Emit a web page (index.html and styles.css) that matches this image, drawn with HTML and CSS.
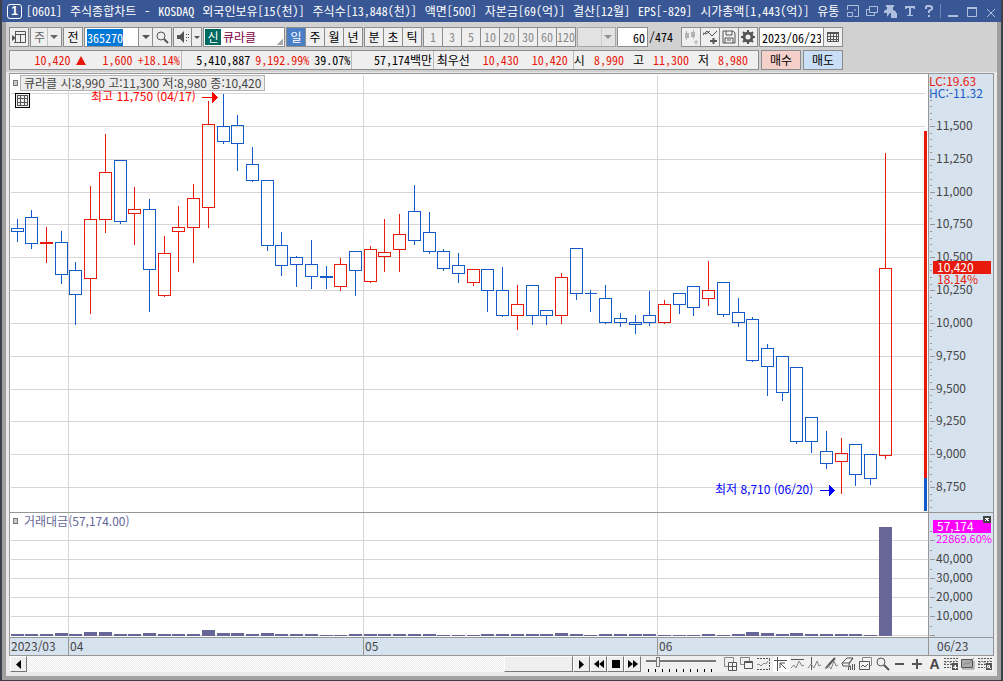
FILE: index.html
```
<!DOCTYPE html>
<html lang="ko">
<head>
  <meta charset="UTF-8" />
  <meta name="viewport" content="width=device-width, initial-scale=1.0"/>
  <title>[0601] 주식종합차트</title>
  <link rel="stylesheet" href="styles.css">
</head>
<body>

  <header class="titlebar">
    <span class="badge">1</span>
    <div class="title-text">
      <span>[0601]</span><span>주식종합차트</span><span>-</span><span>KOSDAQ</span><span>외국인보유[15(천)]</span><span>주식수[13,848(천)]</span><span>액면[500]</span><span>자본금[69(억)]</span><span>결산[12월]</span><span>EPS[-829]</span><span>시가총액[1,443(억)]</span><span>유통</span>
    </div>
    <div class="title-tools">
      <button aria-label="화면 축소"><svg width="14" height="14"><path d="M1.5 6V1.5h11v11H8M1.5 8.5h5v4h-5zM8 6h2"/></svg></button>
      <button aria-label="화면 복사"><svg width="14" height="14"><path d="M4.500 2.500h8v6h-8zM4 5.500H1.500v6h8V9"/></svg></button>
      <button aria-label="고정"><svg width="14" height="14"><path class="solid" d="M2 1h8v2H9v3l2 1v2H6l-3 4V9H0V7l3-2V3H2z"/><path class="solid" d="M7 9h6v5H7z"/><path d="M8.500 9V7.500h3V9"/></svg></button>
      <button aria-label="글꼴"><svg width="14" height="14"><path class="solid" d="M2 2h10v3h-1l-1-1H8v7h2v1H4v-1h2V4H4L3 5H2z"/></svg></button>
      <button aria-label="도움말"><svg width="14" height="14"><path class="thick" d="M4 5V3l1-1h3l2 1v2L7 7v2M7 11v2"/></svg></button>
    </div>
    <div class="window-tools">
      <button aria-label="최소화"><svg width="14" height="14"><path class="thick" d="M2 12h10"/></svg></button>
      <button aria-label="최대화"><svg width="14" height="14"><path d="M2.500 3.500h9v9h-9z"/><path class="thick" d="M2 4h10"/></svg></button>
      <button aria-label="닫기"><svg width="14" height="14"><path d="M3 5l8 8M11 5l-8 8"/></svg></button>
    </div>
  </header>

  <main class="frame">
    <div class="toolbars">
      <div class="toolbar">
        <button class="btn" aria-label="종목 목록"><svg width="16" height="14"><path d="M4.500 1.500h10v11H3M4.500 1v12M4.500 4.500h10M9.500 4v8"/><path class="solid" d="M1 5l4 3-4 3z"/></svg></button>
        <select class="pick market" aria-label="시장"><option>주</option></select>
        <button class="btn">전</button>
        <div class="joined">
          <input class="field code" aria-label="종목코드" value="365270">
          <button class="btn drop" aria-label="종목코드 목록"><i class="arrow"></i></button>
          <button class="btn" aria-label="검색"><svg width="14" height="14"><circle cx="6" cy="6" r="4"/><path class="thick" d="M9 9l4 4"/></svg></button>
        </div>
        <div class="joined">
          <button class="btn sound" aria-label="소리"><svg width="14" height="14"><path class="solid" d="M1 5h3l4-4v12L4 9H1z"/><path d="M10 4.500h1M10 7.500h1M10 10.500h1M12 4.500h1M12 7.500h1"/></svg></button>
          <button class="btn thin" aria-label="소리 설정"><i class="arrow"></i></button>
        </div>
        <div class="stock"><b>신</b><span>큐라클</span></div>
        <div class="joined">
          <button class="btn active">일</button><button class="btn">주</button><button class="btn">월</button><button class="btn">년</button>
        </div>
        <div class="joined">
          <button class="btn">분</button><button class="btn">초</button><button class="btn">틱</button>
        </div>
        <div class="joined minutes">
          <button class="btn">1</button><button class="btn">3</button><button class="btn">5</button><button class="btn">10</button><button class="btn">20</button><button class="btn">30</button><button class="btn">60</button><button class="btn">120</button>
        </div>
        <select class="pick custom" aria-label="분 직접선택" disabled><option></option></select>
        <input class="field count" aria-label="봉 개수" value="60">
        <span class="total">/474</span>
        <div class="joined">
          <button class="btn" aria-label="종목 추가"><svg class="faint" width="16" height="16"><path d="M3.500 2v9M10.500 1v9M11 13h4M13 11v5"/><path class="solid" d="M2 4h4v5H2zM8 3h4v5H8z"/></svg></button>
          <button class="btn" aria-label="지표 추가"><svg width="16" height="16"><path d="M1 6l4-4 5 5 5-5M1 4l3 1 4-3"/><path class="thick" d="M8 12h7M11.500 9v6"/></svg></button>
          <button class="btn" aria-label="저장"><svg width="16" height="16"><path d="M2 2h10l2 2v10H2zM5 2v4h6V2M4 14V9h8v5M6 11h4"/></svg></button>
          <button class="btn" aria-label="설정"><svg width="16" height="16"><circle class="gear" cx="8" cy="8" r="4"/><path class="thick" d="M8 1v3M8 12v3M1 8h3M12 8h3M3 3l2 2M11 11l2 2M13 3l-2 2M3 13l2-2"/></svg></button>
        </div>
        <div class="joined">
          <input class="field date" aria-label="기준일" value="2023/06/23">
          <button class="btn" aria-label="달력"><svg width="14" height="14"><path d="M1.500 2.500h11v9h-11zM1 6.500h11M1 9.500h11M4.500 4v8M7.500 4v8M10.500 4v8"/><path class="thick" d="M1 3h12"/></svg></button>
        </div>
      </div>

      <div class="toolbar">
        <div class="quote">
          <div class="cell price"><span class="up">10,420</span><i class="tri"></i><span class="up change">1,600</span><span class="up">+18.14%</span></div>
          <div class="cell volume"><span>5,410,887</span><span class="up">9,192.99%</span><span>39.07%</span></div>
          <div class="cell amount"><span>57,174백만</span></div>
          <div class="cell best"><span>최우선</span><span class="up">10,430</span><span class="up">10,420</span></div>
          <div class="cell range"><span>시</span><span class="up">8,990</span><span>고</span><span class="up">11,300</span><span>저</span><span class="up">8,980</span></div>
        </div>
        <button class="btn order buy">매수</button>
        <button class="btn order sell">매도</button>
      </div>
    </div>

    <section class="chart">
      <div class="plots">
        <div class="plot">
          <svg id="plot" viewBox="10 74 918 563" preserveAspectRatio="none">
            <g id="grid"></g>
            <path class="sep" d="M10 512.500h918"/>
            <g id="volumes"></g>
            <g id="candles"></g>
            <path class="bar-up" d="M924 131h3v347h-3z"/>
            <path class="bar-down" d="M924 478h3v33h-3z"/>
            <g class="high"><text x="91" y="101">최고 11,750 (04/17)</text><path d="M202 97h10v-5l6 5.500-6 5.500v-5h-10z"/></g>
            <g class="low"><text x="715" y="494">최저 8,710 (06/20)</text><path d="M820 490h9v-5l6 5.500-6 5.500v-5h-9z"/></g>
          </svg>
          <div class="legend"><i class="mark"></i><span class="legend-box">큐라클 시:8,990 고:11,300 저:8,980 종:10,420</span></div>
          <button class="grid-btn" aria-label="데이터 보기"><svg width="11" height="11"><path d="M.5.5h10v10H.5zM0 3.500h11M0 7.500h11M3.500 0v11M7.500 0v11"/></svg></button>
          <div class="legend legend-vol"><i class="mark"></i><span>거래대금(57,174.00)</span></div>
        </div>
        <svg id="axis" class="axis" viewBox="929 74 64 563" preserveAspectRatio="none">
          <text class="lc" x="929" y="86">LC:19.63</text>
          <text class="hc" x="929" y="98">HC:-11.32</text>
          <g id="ticks"></g>
          <path class="axis-bg" d="M936 274h57v11h-57z"/>
          <path class="bar-up" d="M933 261h58v13h-58z"/>
          <text class="now" x="937" y="272">10,420</text>
          <text class="rate" x="937" y="284">18.14%</text>
          <path class="sep" d="M929 512.500h64"/>
          <path class="vol-tag" d="M933 520h58v13h-58z"/>
          <text class="now" x="937" y="531">57,174</text>
          <text class="vol-rate" x="936" y="543">22869.60%</text>
          <path class="close-box" d="M983 516h8v7h-8z"/>
          <path class="close-x" d="M985 518l4 3M989 518l-4 3"/>
        </svg>
      </div>
      <div class="dates">
        <div class="months"><span>2023/03</span><span>04</span><span>05</span><span>06</span></div>
        <span class="today">06/23</span>
      </div>
    </section>

    <footer class="controls">
      <button class="raised" aria-label="왼쪽으로"><svg width="7" height="9"><path class="solid" d="M6 0v9L1 4.500z"/></svg></button>
      <div class="track"><div class="thumb"></div></div>
      <button class="raised" aria-label="오른쪽으로"><svg width="7" height="9"><path class="solid" d="M1 0v9l5-4.500z"/></svg></button>
      <button class="raised" aria-label="뒤로"><svg width="10" height="8"><path class="solid" d="M5 0v8L0 4zM10 0v8L5 4z"/></svg></button>
      <button class="raised" aria-label="정지"><svg width="8" height="8"><path class="solid" d="M0 0h8v8H0z"/></svg></button>
      <button class="raised" aria-label="앞으로"><svg width="10" height="8"><path class="solid" d="M0 0v8l5-4zM5 0v8l5-4z"/></svg></button>
      <div class="zoom"><input type="range" aria-label="재생 속도" min="0" max="20" value="3"><i class="marks"></i></div>
      <div class="tools">
        <button aria-label="차트 추가"><svg width="16" height="16"><path class="lite" d="M2.500 1.500h9v9h-9z"/><path class="fill" d="M6.500 6.500h8v8h-8zM10.500 6v8M6 10.500h8"/></svg></button>
        <button aria-label="차트 겹치기"><svg width="16" height="16"><path class="lite" d="M1.500 1.500h9v7h-9z"/><path class="fill" d="M5.500 5.500h8v7h-8z"/><path d="M5 6.500h9"/></svg></button>
        <button aria-label="구간 분할"><svg width="16" height="16"><path class="dots" d="M1 2.500h13M1 13.500h13M13.500 3v10"/><path class="lite" d="M1 9l2-1 2 2 3-3 2 1 2-3"/></svg></button>
        <button class="on" aria-label="선택"><svg width="16" height="16"><path d="M1 4.500h13M4.500 1v14"/><path d="M7 7l6 6M7 12V7h5"/></svg></button>
        <button aria-label="수평선"><svg width="16" height="16"><path d="M1 3.500h13"/><path class="lite" d="M1 12l3-3 2 3 3-7 3 5 2-1"/></svg></button>
        <button aria-label="수직선"><svg width="16" height="16"><path d="M4.500 1v13"/><path class="lite" d="M1 12l3-4 3 4 3-7 2 5 2-1"/></svg></button>
        <button aria-label="추세선"><svg width="16" height="16"><path class="mid" d="M2 12L11 2"/><path class="lite" d="M1 13l3-4 3 4 3-8 2 5 2-1"/></svg></button>
        <button aria-label="모두 지우기"><svg width="16" height="16"><path class="fill" d="M1 7l5-5h6l-4 6v2H2z"/><path d="M2 7h6l4-5M7.500 14v-3l2-1v4M11.500 8v6M13.500 8v6"/></svg></button>
        <button aria-label="차트 저장"><svg width="16" height="16"><path class="lite fill" d="M4.500 1.500h9v8h-9z"/><path class="fill" d="M1.500 5.500h10v8h-10z"/><path d="M3 11l2-2 2 2 3-3"/></svg></button>
        <button aria-label="돋보기"><svg width="16" height="16"><circle cx="6" cy="6" r="4"/><path class="thick" d="M9 9l5 5"/></svg></button>
        <button aria-label="축소"><svg width="16" height="16"><path class="thick" d="M3 8h9"/></svg></button>
        <button aria-label="확대"><svg width="16" height="16"><path class="thick" d="M3 8h10M8 3v10"/></svg></button>
        <button class="letter">A</button>
        <button aria-label="차트 유형"><svg width="16" height="16"><path class="dots" d="M1 2.500h14M1 5.500h14M1 8.500h8M1 11.500h7"/><path class="lite" d="M1 8l4-3 4 3 4-4"/><path class="solid" d="M9 7h6v7H9z"/><path class="white" d="M12.500 13V9l-2 2.500h4"/></svg></button>
        <button aria-label="배경"><svg width="16" height="16"><path class="gray" d="M1.500 3.500h11v8h-11z"/><path class="lite" d="M3 9l3-2 2 1 6-6M2 13h12V5"/></svg></button>
        <button aria-label="차트 검색"><svg width="16" height="16"><path class="dots" d="M1 2.500h14M1 5.500h14M1 8.500h8M1 11.500h7"/><path class="lite" d="M1 8l4-3 4 3 4-4"/><path class="solid" d="M9 7h6v7H9z"/><path class="white" d="M10.500 9.500h2v2h-2zM12 11l2 2"/></svg></button>
      </div>
    </footer>
  </main>

  <script>
    // center x, high, body top, body bottom, low, direction, volume height
    const candles = [
      [17, 218, 228, 231, 240, "d", 2], [31, 209, 217, 243, 247, "d", 2], [46, 226, 242, 243, 261, "u", 2],
      [61, 230, 242, 274, 282, "d", 3], [75, 261, 270, 294, 323, "d", 2], [90, 185, 219, 278, 312, "u", 4],
      [105, 133, 172, 219, 231, "u", 4], [120, 160, 160, 221, 222, "d", 2], [134, 186, 209, 213, 243, "u", 2],
      [149, 198, 209, 269, 310, "d", 3], [164, 235, 253, 295, 295, "u", 2], [178, 205, 227, 231, 270, "u", 2],
      [193, 183, 198, 227, 261, "u", 2], [208, 100, 124, 207, 226, "u", 6], [223, 93, 126, 141, 142, "d", 3],
      [237, 114, 125, 143, 169, "d", 3], [252, 146, 164, 180, 180, "d", 2], [267, 180, 180, 245, 249, "d", 3],
      [281, 231, 245, 265, 274, "d", 2], [296, 255, 257, 264, 285, "d", 2], [311, 239, 264, 276, 287, "d", 2],
      [326, 265, 276, 277, 287, "d", 1], [340, 257, 264, 286, 289, "u", 1], [355, 251, 251, 270, 294, "d", 2],
      [370, 245, 249, 281, 281, "u", 2], [384, 218, 252, 256, 270, "u", 2], [399, 213, 234, 249, 270, "u", 2],
      [414, 184, 211, 240, 243, "d", 2], [429, 211, 232, 251, 252, "d", 2], [443, 248, 251, 268, 269, "d", 1],
      [458, 252, 265, 273, 281, "d", 1], [473, 269, 269, 282, 284, "u", 1], [487, 269, 269, 290, 310, "d", 2],
      [502, 266, 290, 315, 315, "d", 2], [517, 284, 304, 315, 328, "u", 2], [532, 285, 285, 315, 323, "d", 2],
      [546, 310, 310, 315, 323, "d", 2], [561, 272, 277, 315, 322, "u", 3], [576, 248, 248, 293, 298, "d", 2],
      [590, 289, 293, 293, 310, "d", 1], [605, 284, 298, 322, 322, "d", 2], [620, 312, 318, 322, 325, "d", 2],
      [635, 314, 322, 324, 332, "d", 2], [649, 290, 315, 322, 324, "d", 2], [664, 299, 304, 322, 322, "u", 1],
      [679, 293, 293, 304, 312, "d", 1], [693, 286, 286, 307, 314, "d", 1], [708, 260, 290, 298, 304, "u", 2],
      [723, 282, 282, 314, 315, "d", 1], [738, 297, 312, 322, 325, "d", 2], [752, 316, 319, 360, 360, "d", 4],
      [767, 343, 348, 366, 394, "d", 3], [782, 356, 356, 392, 399, "d", 2], [796, 367, 367, 441, 442, "d", 3],
      [811, 417, 417, 441, 451, "d", 2], [826, 430, 451, 463, 467, "d", 2], [841, 437, 453, 461, 492, "u", 2],
      [855, 444, 444, 474, 484, "d", 2], [870, 454, 454, 478, 483, "d", 1], [885, 152, 268, 455, 457, "u", 109]
    ];

    const monthLines = [68, 363, 657];
    const priceY = price => Math.round(126 + (11500 - price) * 0.1313);
    const volumeY = amount => Math.round(635 - amount * 0.0019);

    let grid = "", ticks = "", bars = "", bodies = "";

    monthLines.forEach(x => grid += `<path d="M${x} 74v563"/>`);

    for (let p = 11750; p >= 8750; p -= 250) {
      const y = priceY(p);
      grid += `<path d="M10 ${y}h914"/>`;
      if (p < 11750) {
        ticks += `<path d="M929 ${y}h5"/><text x="936" y="${y + 4}">${p.toLocaleString("en-US")}</text>`;
      }
    }
    for (let p = 11750; p > 8570; p -= 50) ticks += `<path d="M929 ${priceY(p)}h2"/>`;

    for (let v = 0; v <= 50000; v += 10000) {
      const y = volumeY(v);
      grid += `<path d="M10 ${y}h917"/>`;
      ticks += `<path d="M929 ${y}h5M929 ${y - 9}h2"/>`;
      if (v > 0 && v < 50000) ticks += `<text x="936" y="${y + 4}">${v.toLocaleString("en-US")}</text>`;
    }

    candles.forEach(([x, high, top, bottom, low, dir, vol]) => {
      bars += `<rect x="${x - 6}" y="${636 - vol}" width="13" height="${vol}"/>`;
      bodies += `<path class="${dir}" d="M${x - 6} ${top}h12V${bottom}h-12zM${x} ${high}V${top}M${x} ${bottom}V${low + 1}"/>`;
    });

    document.getElementById("grid").innerHTML = grid;
    document.getElementById("ticks").innerHTML = ticks;
    document.getElementById("volumes").innerHTML = bars;
    document.getElementById("candles").innerHTML = bodies;

    const code = document.querySelector(".code");
    code.focus();
    code.select();
  </script>
</body>
</html>
```
FILE: styles.css
```
:root {
  --up: #e71a0c;
  --down: #125bc8;
  --line: #969696;
  --axis: #d7e2ef;
  --mono: "Noto Sans Mono CJK KR", "Noto Sans CJK KR", monospace;
  --sans: "Noto Sans CJK KR", sans-serif;
}

* {
  box-sizing: border-box;
}

body {
  background: #3c4149;
  margin: 0;
  padding: 0 2px 1px;
  height: 100vh;
  display: flex;
  flex-direction: column;
  font: 12px/16px var(--mono);
  color: black;
  overflow: hidden;
}

button, input, select {
  font: inherit;
  color: inherit;
  margin: 0;
  padding: 0;
  border-radius: 0;
}

svg {
  display: block;
  fill: none;
  stroke: #555;
}

svg .solid {
  fill: #555;
  stroke: none;
}

svg .thick {
  stroke-width: 2;
}

/* title bar */

.titlebar {
  display: flex;
  align-items: center;
  height: 22px;
  flex: none;
  padding: 0 3px 0 5px;
  background: #3a5795;
  color: white;
}

.badge {
  width: 15px;
  height: 15px;
  border: 1px solid white;
  border-radius: 3px;
  font: bold 12px/13px "Liberation Sans", sans-serif;
  text-align: center;
  margin-right: 4px;
}

.title-text {
  flex: 1;
  display: flex;
  gap: 8px;
  overflow: hidden;
  white-space: nowrap;
}

.title-tools, .window-tools {
  display: flex;
  gap: 5px;
  padding-left: 5px;
}

.window-tools {
  margin-left: 4px;
  padding-left: 5px;
  border-left: 1px solid #6f86b8;
}

.titlebar button {
  border: 0;
  background: none;
}

.titlebar svg {
  stroke: #aebfe0;
}

.titlebar svg .solid {
  fill: #aebfe0;
}

/* toolbars */

.frame {
  flex: 1;
  min-height: 0;
  display: flex;
  flex-direction: column;
  border: solid #a0a0a0;
  border-width: 0 4px 4px;
  background: #e9e9e9;
}

.toolbars {
  background: #d1d1d1;
  padding: 5px 3px 2px;
  display: flex;
  flex-direction: column;
  gap: 3px;
}

.toolbar {
  display: flex;
  gap: 1px;
  height: 20px;
}

.joined {
  display: flex;
}

.joined > * + * {
  margin-left: -1px;
}

.btn {
  width: 20px;
  height: 20px;
  flex: none;
  display: flex;
  align-items: center;
  justify-content: center;
  border: 1px solid #8c8c8c;
  background: #efefef;
  white-space: nowrap;
}

.btn.drop {
  width: 15px;
}

.btn.thin {
  width: 11px;
}

.btn.sound {
  width: 19px;
}

.btn.active {
  background: #4a7fc8;
  color: white;
}

.minutes {
  color: #8a8a8a;
}

.arrow {
  border: 4px solid transparent;
  border-top-color: #555;
  border-bottom: 0;
}

.thin .arrow {
  border-width: 3px 3px 0;
}

.pick {
  appearance: none;
  height: 20px;
  border: 1px solid #8c8c8c;
  padding-left: 3px;
  background: #efefef url("data:image/svg+xml,%3Csvg xmlns='http://www.w3.org/2000/svg' width='14' height='18'%3E%3Cpath d='M0 0v18' stroke='%23999'/%3E%3Cpath d='M3 7h8l-4 4z' fill='%23666'/%3E%3C/svg%3E") no-repeat right center;
}

.market {
  width: 32px;
  color: #666;
}

.custom {
  width: 39px;
  opacity: .6;
}

.field {
  height: 20px;
  border: 1px solid #8c8c8c;
  background: white;
  outline: 0;
  padding: 0 2px;
}

.code {
  width: 55px;
}

.code::selection {
  background: #0078d7;
  color: white;
}

.count {
  width: 31px;
  text-align: right;
}

.date {
  width: 65px;
}

.total {
  width: 31px;
  line-height: 20px;
}

.faint {
  opacity: .4;
}

.gear {
  stroke-width: 3;
}

.stock {
  width: 82px;
  display: flex;
  align-items: center;
  gap: 2px;
  padding: 1px;
  border: 1px solid #8c8c8c;
  background: linear-gradient(135deg, transparent 50%, #aaa 50%) no-repeat right 1px bottom 1px / 7px 7px, white;
  color: #800040;
}

.stock b {
  width: 16px;
  background: #00695f;
  color: white;
  font-weight: normal;
  text-align: center;
}

/* quote line */

.quote {
  width: 750px;
  display: flex;
  border: 1px solid #8c8c8c;
  background: #efefef;
  line-height: 18px;
  white-space: nowrap;
}

.cell {
  display: flex;
  justify-content: flex-end;
  gap: 5px;
  padding-right: 1px;
  border-right: 1px solid #bbb;
}

.price {
  width: 172px;
}

.volume {
  width: 171px;
}

.amount {
  width: 82px;
}

.best {
  width: 140px;
  gap: 13px;
  padding-right: 5px;
}

.range {
  flex: 1;
  border-right: 0;
  gap: 9px;
  padding-right: 10px;
}

.up {
  color: var(--up);
}

.tri {
  align-self: center;
  border: 5px solid transparent;
  border-bottom: 9px solid var(--up);
  border-top: 0;
}

.change {
  margin-left: 12px;
}

.order {
  width: 40px;
  margin-left: 1px;
}

.buy {
  background: #f5d0cb;
}

.sell {
  background: #c8dff5;
}

/* chart */

.chart {
  flex: 1;
  min-height: 0;
  display: flex;
  flex-direction: column;
  margin: 1px 3px 0;
  border: 1px solid var(--line);
  background: white;
  font-family: var(--sans);
  color: #464646;
}

.plots {
  flex: 1;
  min-height: 0;
  display: flex;
}

.plot {
  flex: 1;
  min-width: 0;
  position: relative;
}

.plots svg {
  stroke-width: 1;
  shape-rendering: crispEdges;
}

#plot {
  width: 100%;
  height: 100%;
}

#plot text, #axis text {
  stroke: none;
  fill: #464646;
}

#grid, #candles, #ticks path {
  transform: translate(.5px, .5px);
}

#grid {
  stroke: #d6d6d6;
}

#volumes {
  fill: #666699;
  stroke: none;
}

#candles .u {
  stroke: var(--up);
}

#candles .d {
  stroke: var(--down);
}

.plots .sep {
  stroke: var(--line);
}

.plots .bar-up {
  fill: var(--up);
  stroke: none;
}

.bar-down {
  fill: var(--down);
  stroke: none;
}

#plot .high, #plot .high text {
  fill: red;
  stroke: none;
}

#plot .low, #plot .low text {
  fill: blue;
  stroke: none;
}

.axis {
  flex: none;
  width: 65px;
  height: 100%;
  border-left: 1px solid var(--line);
  background: var(--axis);
  font-size: 12px;
}

.axis path {
  stroke: var(--line);
}

.axis .axis-bg {
  fill: var(--axis);
  stroke: none;
}

#axis .lc, #axis .rate {
  fill: var(--up);
}

#axis .hc {
  fill: var(--down);
}

#axis .now {
  fill: white;
}

.axis .vol-tag {
  fill: #f0f;
  stroke: none;
}

#axis .vol-rate {
  fill: #f0f;
  font-size: 11px;
}

.axis .close-box {
  fill: #444;
  stroke: none;
}

.axis .close-x {
  stroke: white;
}

.legend {
  position: absolute;
  left: 3px;
  top: 1px;
  display: flex;
  align-items: center;
  gap: 2px;
  line-height: 14px;
}

.legend-vol {
  top: 440px;
  gap: 6px;
  color: #666699;
}

.legend-box {
  border: 1px solid #b4b4b4;
  background: #ececec;
  padding: 0 3px;
}

.mark {
  width: 5px;
  height: 6px;
  border: 1px solid #777;
  background: #ccc;
}

.grid-btn {
  position: absolute;
  left: 5px;
  top: 19px;
  padding: 1px;
  border: 1px solid black;
  background: #eee;
}

.dates {
  display: flex;
  height: 18px;
  border-top: 1px solid var(--line);
  background: var(--axis);
  line-height: 16px;
}

.months {
  flex: 1;
  display: grid;
  grid-template-columns: 58fr 295fr 294fr 271fr;
}

.months span {
  padding-left: 1px;
}

.months span + span {
  border-left: 1px solid var(--line);
}

.today {
  width: 65px;
  padding-left: 8px;
  border-left: 1px solid var(--line);
}

/* bottom controls */

.controls {
  display: flex;
  height: 20px;
  padding: 0 3px 4px;
  margin-left: 1px;
}

.raised {
  width: 17px;
  display: flex;
  align-items: center;
  justify-content: center;
  border: 1px solid;
  border-color: #fff #777 #777 #fff;
  background: #efefef;
}

.raised .solid {
  fill: black;
}

.track {
  flex: 1;
  display: flex;
  justify-content: flex-end;
  background: repeating-conic-gradient(#fff 0 25%, #ececec 0 50%) 0 0 / 2px 2px;
}

.thumb {
  width: 69px;
  border: 1px solid;
  border-color: #fff #777 #777 #fff;
  background: #efefef;
}

.zoom {
  width: 81px;
  padding: 0 5px;
  background: #f0f0f0;
}

.zoom input {
  appearance: none;
  display: block;
  width: 70px;
  height: 11px;
  background: linear-gradient(#777, #777) no-repeat center 4px / 100% 2px;
}

.zoom input::-webkit-slider-thumb {
  appearance: none;
  width: 4px;
  height: 10px;
  border: 1px solid #777;
  background: #eee;
}

.marks {
  display: block;
  height: 3px;
  margin: 2px 0 0 2px;
  width: 67px;
  background: repeating-linear-gradient(90deg, black 0 1px, transparent 1px 7px);
}

.tools {
  display: flex;
  background: #f0f0f0;
}

.tools button {
  width: 17px;
  border: 0;
  background: none;
}

.tools .on {
  background: white;
}

.tools .lite {
  stroke: #888;
}

.tools .mid {
  stroke-width: 2;
}

.tools .fill {
  fill: #f4f4f4;
}

.tools .gray {
  fill: #aaa;
}

.tools .dots {
  stroke-dasharray: 2 1;
}

.tools .white {
  stroke: white;
}

.tools .letter {
  font: bold 14px/16px "Liberation Sans", sans-serif;
  color: #444;
}
```
